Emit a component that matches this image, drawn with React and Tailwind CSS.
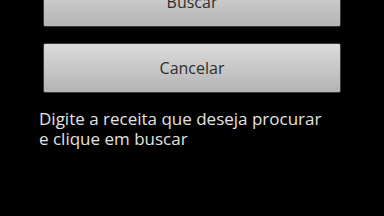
import React from 'react';

const Botao = ({ children }) => (
  <button className="h-[50px] w-[298px] mx-[43px] rounded-[2px] border border-[#3a3a3a] bg-gradient-to-b from-[#dcdcdc] to-[#b4b4b4] text-[16px] text-[#2e2e2e] flex items-center justify-center">
    {children}
  </button>
);

export default function App() {
  return (
    <div className="w-[384px] h-[216px] bg-black overflow-hidden font-['Open_Sans','Noto_Sans',sans-serif]">
      <div className="-mt-[23px] flex flex-col gap-[16px]">
        <Botao>Buscar</Botao>
        <Botao>Cancelar</Botao>
      </div>
      <p className="mt-[16px] ml-[39px] w-[296px] text-[17px] leading-[20px] text-[#e2e2e2]">
        Digite a receita que deseja procurar e clique em buscar
      </p>
    </div>
  );
}
